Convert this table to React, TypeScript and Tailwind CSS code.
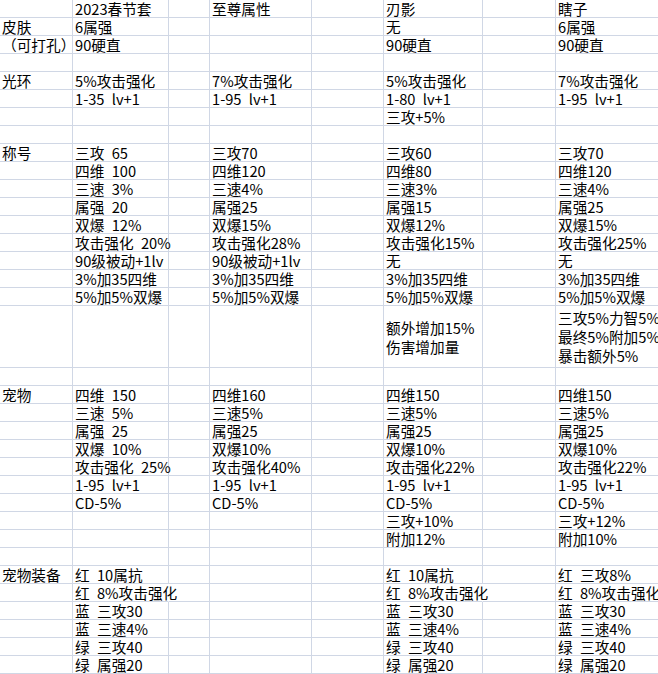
const cols = [
  "w-[73px]",
  "w-[96px]",
  "w-[41px]",
  "w-[102px]",
  "w-[72px]",
  "w-[99px]",
  "w-[73px]",
  "w-[140px]",
];

type Row = { cells: string[]; tall?: boolean; spill?: boolean };

// a row lists columns A, B, D, F, H — C, E and G are always blank
const r = (a: string, b: string, d: string, f: string, h: string, opts: Partial<Row> = {}): Row => ({
  cells: [a, b, "", d, "", f, "", h],
  ...opts,
});
const blank = () => r("", "", "", "", "");

const rows: Row[] = [
  r("", "2023春节套", "至尊属性", "刃影", "瞎子"),
  r("皮肤", "6属强", "", "无", "6属强"),
  r("（可打孔）", "90硬直", "", "90硬直", "90硬直"),
  blank(),
  r("光环", "5%攻击强化", "7%攻击强化", "5%攻击强化", "7%攻击强化"),
  r("", "1-35 lv+1", "1-95 lv+1", "1-80 lv+1", "1-95 lv+1"),
  r("", "", "", "三攻+5%", ""),
  blank(),
  r("称号", "三攻 65", "三攻70", "三攻60", "三攻70"),
  r("", "四维 100", "四维120", "四维80", "四维120"),
  r("", "三速 3%", "三速4%", "三速3%", "三速4%"),
  r("", "属强 20", "属强25", "属强15", "属强25"),
  r("", "双爆 12%", "双爆15%", "双爆12%", "双爆15%"),
  r("", "攻击强化 20%", "攻击强化28%", "攻击强化15%", "攻击强化25%"),
  r("", "90级被动+1lv", "90级被动+1lv", "无", "无"),
  r("", "3%加35四维", "3%加35四维", "3%加35四维", "3%加35四维"),
  r("", "5%加5%双爆", "5%加5%双爆", "5%加5%双爆", "5%加5%双爆"),
  r("", "", "", "额外增加15%\n伤害增加量", "三攻5%力智5%\n最终5%附加5%\n暴击额外5%", { tall: true }),
  blank(),
  r("宠物", "四维 150", "四维160", "四维150", "四维150"),
  r("", "三速 5%", "三速5%", "三速5%", "三速5%"),
  r("", "属强 25", "属强25", "属强25", "属强25"),
  r("", "双爆 10%", "双爆10%", "双爆10%", "双爆10%"),
  r("", "攻击强化 25%", "攻击强化40%", "攻击强化22%", "攻击强化22%"),
  r("", "1-95 lv+1", "1-95 lv+1", "1-95 lv+1", "1-95 lv+1"),
  r("", "CD-5%", "CD-5%", "CD-5%", "CD-5%"),
  r("", "", "", "三攻+10%", "三攻+12%"),
  r("", "", "", "附加12%", "附加10%"),
  blank(),
  r("宠物装备", "红 10属抗", "", "红 10属抗", "红 三攻8%"),
  r("", "红 8%攻击强化", "", "红 8%攻击强化", "红 8%攻击强化", { spill: true }),
  r("", "蓝 三攻30", "", "蓝 三攻30", "蓝 三攻30"),
  r("", "蓝 三速4%", "", "蓝 三速4%", "蓝 三速4%"),
  r("", "绿 三攻40", "", "绿 三攻40", "绿 三攻40"),
  r("", "绿 属强20", "", "绿 属强20", "绿 属强20"),
];

// SimSun-style half-width space
const fix = (s: string) => s.replace(/ /g, "\u2002");

export default function App() {
  return (
    <div className="w-[658px] h-[674px] overflow-hidden bg-white text-black text-[14.67px] font-['Noto_Sans_CJK_SC','Noto_Sans',sans-serif]">
      {rows.map((row, i) => (
        <div key={i} className={row.tall ? "flex h-[62px]" : "flex h-[18px]"}>
          {row.cells.map((text, j) => {
            const spills = row.spill && (j === 1 || j === 5);
            return (
              <div
                key={j}
                className={`shrink-0 flex border-b border-r border-[#d0d7e5] pl-[2px] whitespace-pre ${cols[j]} ${
                  row.tall ? "items-center leading-[19px]" : "items-end leading-[17px]"
                } ${spills ? "border-r-transparent" : ""}`}
              >
                {fix(text)}
              </div>
            );
          })}
        </div>
      ))}
    </div>
  );
}
